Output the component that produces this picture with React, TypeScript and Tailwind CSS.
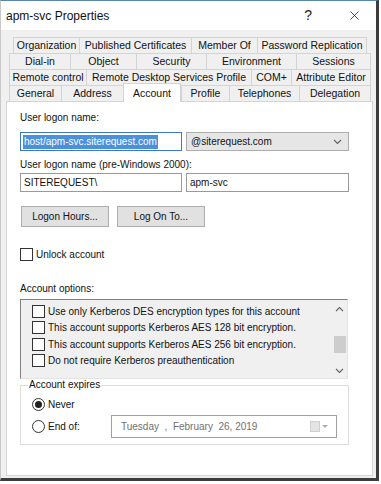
import { X } from "lucide-react";

type Tab = { label: string; w: string; active?: boolean };

const tabRows: { cls: string; tabs: Tab[] }[] = [
  {
    cls: "ml-[12px]",
    tabs: [
      { label: "Organization", w: "w-[66px]" },
      { label: "Published Certificates", w: "w-[112px]" },
      { label: "Member Of", w: "w-[66px]" },
      { label: "Password Replication", w: "w-[110px]" },
    ],
  },
  {
    cls: "ml-[8px]",
    tabs: [
      { label: "Dial-in", w: "w-[61px]" },
      { label: "Object", w: "w-[66px]" },
      { label: "Security", w: "w-[70px]" },
      { label: "Environment", w: "w-[90px]" },
      { label: "Sessions", w: "w-[75px]" },
    ],
  },
  {
    cls: "ml-[8px]",
    tabs: [
      { label: "Remote control", w: "w-[77px]" },
      { label: "Remote Desktop Services Profile", w: "w-[165px]" },
      { label: "COM+", w: "w-[40px]" },
      { label: "Attribute Editor", w: "w-[80px]" },
    ],
  },
  {
    cls: "ml-[8px]",
    tabs: [
      { label: "General", w: "w-[52px]" },
      { label: "Address", w: "w-[62px]" },
      { label: "Account", w: "w-[58px]", active: true },
      { label: "Profile", w: "w-[48px]" },
      { label: "Telephones", w: "w-[70px]" },
      { label: "Delegation", w: "w-[72px]" },
    ],
  },
];

const options = [
  "Use only Kerberos DES encryption types for this account",
  "This account supports Kerberos AES 128 bit encryption.",
  "This account supports Kerberos AES 256 bit encryption.",
  "Do not require Kerberos preauthentication",
];

function Chevron({ up = false }: { up?: boolean }) {
  return (
    <svg width="9" height="6" viewBox="0 0 9 6" className="text-[#606060]">
      <path
        d={up ? "M1 5 L4.5 1.5 L8 5" : "M1 1 L4.5 4.5 L8 1"}
        fill="none"
        stroke="currentColor"
        strokeWidth="1.1"
      />
    </svg>
  );
}

function CheckBox() {
  return <div className="w-[13px] h-[13px] border border-[#333] bg-white shrink-0" />;
}

export default function App() {
  return (
    <div className="w-[381px] h-[484px] bg-white font-['Liberation_Sans',Arial,sans-serif] text-[10px] text-[#111]">
      <div className="w-[379px] h-[481px] bg-[#f0f0f0] border-t border-t-[#5b86ad] border-r-[3px] border-b-[3px] border-r-[#3c3c3c] border-b-[#3c3c3c] border-l border-l-[#c8c8c8] flex flex-col">
        {/* title bar */}
        <div className="h-[29px] bg-white flex items-center pl-[5px] shrink-0">
          <span className="text-[12px] text-[#111]">apm-svc Properties</span>
          <span className="ml-auto text-[14px] text-[#222] mr-[35px]">?</span>
          <X size={15} strokeWidth={1.3} className="text-[#222] mr-[14px]" />
        </div>

        {/* tabs */}
        <div className="mt-[7px] flex flex-col text-[10.5px]">
          {tabRows.map((row, i) => (
            <div key={i} className={`${row.cls} flex h-[16px] items-end`}>
              {row.tabs.map((t) =>
                t.active ? (
                  <div
                    key={t.label}
                    className={`${t.w} h-[19px] -mb-[1px] relative z-10 bg-white border-x border-t border-[#d4d4d4] flex items-start justify-center pt-[2px]`}
                  >
                    {t.label}
                  </div>
                ) : (
                  <div
                    key={t.label}
                    className={`${t.w} h-[16px] border-t border-l last:border-r border-[#d4d4d4] flex items-center justify-center whitespace-nowrap`}
                  >
                    {t.label}
                  </div>
                )
              )}
            </div>
          ))}
        </div>

        {/* panel */}
        <div className="ml-[5px] w-[367px] h-[375px] bg-white border border-[#d4d4d4] pl-[13px] flex flex-col">
          <div className="mt-[10px] h-[12px] leading-[12px]">User logon name:</div>
          <div className="mt-[8px] flex gap-[4px]">
            <div className="w-[162px] h-[19px] border border-[#3a78c4] flex items-center px-[2px]">
              <span className="bg-[#4a90dc] text-white leading-[14px] px-[1px]">host/apm-svc.siterequest.com</span>
            </div>
            <div className="w-[163px] h-[19px] border border-[#adadad] bg-[#e6e6e6] flex items-center pl-[4px] pr-[6px]">
              <span>@siterequest.com</span>
              <span className="ml-auto">
                <Chevron />
              </span>
            </div>
          </div>
          <div className="mt-[8px] h-[12px] leading-[12px]">User logon name (pre-Windows 2000):</div>
          <div className="mt-[2px] flex gap-[4px]">
            <div className="w-[162px] h-[19px] border border-[#9a9a9a] flex items-center px-[3px]">SITEREQUEST\</div>
            <div className="w-[163px] h-[19px] border border-[#9a9a9a] flex items-center px-[3px]">apm-svc</div>
          </div>
          <div className="mt-[14px] flex gap-[8px] ml-[1px]">
            <div className="w-[88px] h-[21px] border border-[#adadad] bg-[#e1e1e1] flex items-center justify-center">Logon Hours...</div>
            <div className="w-[88px] h-[21px] border border-[#adadad] bg-[#e1e1e1] flex items-center justify-center">Log On To...</div>
          </div>
          <div className="mt-[21px] flex items-center gap-[3px] h-[13px]">
            <CheckBox />
            <span>Unlock account</span>
          </div>
          <div className="mt-[22px] h-[12px] leading-[12px]">Account options:</div>
          <div className="mt-[4px] w-[328px] h-[80px] border-t border-l border-[#7f7f7f] border-r border-b border-r-[#e3e3e3] border-b-[#e3e3e3] bg-[#f0f0f0] flex">
            <div className="flex-1 pl-[11px] pt-[3px] flex flex-col">
              {options.map((o) => (
                <div key={o} className="h-[16.5px] flex items-center gap-[3px]">
                  <CheckBox />
                  <span className="whitespace-nowrap">{o}</span>
                </div>
              ))}
            </div>
            <div className="w-[15px] flex flex-col items-center">
              <div className="h-[18px] flex items-center">
                <Chevron up />
              </div>
              <div className="mt-[18px] w-[12px] h-[17px] bg-[#cdcdcd]" />
              <div className="mt-auto h-[15px] flex items-center">
                <Chevron />
              </div>
            </div>
          </div>

          {/* account expires group */}
          <div className="mt-[6px] w-[329px] h-[60px] border border-[#dcdcdc] relative flex flex-col">
            <span className="absolute -top-[7px] left-[7px] bg-white px-[1px] leading-[12px]">Account expires</span>
            <div className="mt-[12px] ml-[11px] flex items-center gap-[3px] h-[13px]">
              <div className="w-[13px] h-[13px] rounded-full border border-[#333] flex items-center justify-center">
                <div className="w-[7px] h-[7px] rounded-full bg-[#222]" />
              </div>
              <span>Never</span>
            </div>
            <div className="mt-[4px] ml-[11px] flex items-center h-[23px]">
              <div className="w-[13px] h-[13px] rounded-full border border-[#333] shrink-0" />
              <span className="ml-[3px] w-[63px]">End of:</span>
              <div className="w-[226px] h-[23px] border border-[#a0a0a0] flex items-center pl-[9px] pr-[8px] text-[#707070] whitespace-pre">
                <span>{"Tuesday  ,  February  26, 2019"}</span>
                <span className="ml-auto flex items-center gap-[2px]">
                  <span className="w-[10px] h-[11px] bg-[#e4e4e4] border border-[#d0d0d0]" />
                  <svg width="6" height="4" viewBox="0 0 6 4">
                    <path d="M0 0 L6 0 L3 3 Z" fill="#b0b0b0" />
                  </svg>
                </span>
              </div>
            </div>
          </div>
        </div>
      </div>
    </div>
  );
}
